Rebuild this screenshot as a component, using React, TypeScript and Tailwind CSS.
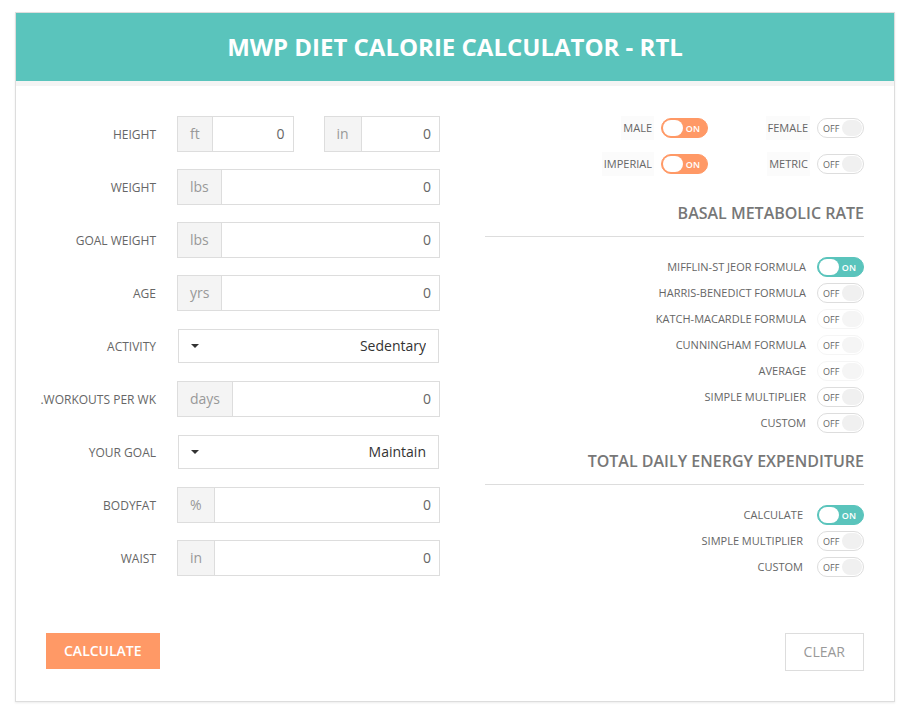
import { useState } from "react";
import type { ReactNode } from "react";

function Toggle({
  id,
  on = false,
  tone = "teal",
  faded = false,
}: {
  id: string;
  on?: boolean;
  tone?: "teal" | "orange";
  faded?: boolean;
}) {
  const [checked, setChecked] = useState(on);
  const onColor = tone === "teal" ? "border-[#5ac4bc] bg-[#5ac4bc]" : "border-[#ff9966] bg-[#ff9966]";
  const offColor = faded ? "border-[#f5f5f5] bg-white" : "border-[#dddddd] bg-white";
  return (
    <span
      className={`relative flex h-5 w-[47px] shrink-0 items-center justify-between rounded-full border px-px font-['Open_Sans','Noto_Sans',sans-serif] text-[9px] leading-none ${
        checked ? `flex-row ${onColor}` : `flex-row-reverse ${offColor}`
      }`}
    >
      <input
        id={id}
        type="checkbox"
        checked={checked}
        disabled={faded}
        onChange={(e) => setChecked(e.target.checked)}
        className="absolute inset-0 m-0 cursor-pointer appearance-none rounded-full"
      />
      <span
        className={`h-4 w-5 rounded-full ${checked ? "bg-white" : faded ? "bg-[#f5f5f5]" : "bg-[#f0f0f0]"}`}
      />
      <span className={checked ? "pr-[6px] font-semibold text-white" : "pl-1 text-[#666666]"}>
        {checked ? "ON" : "OFF"}
      </span>
    </span>
  );
}

function UnitInput({ id, unit, label }: { id: string; unit: string; label?: string }) {
  return (
    <div className="flex h-9 min-w-0 flex-1 border border-[#dddddd] text-sm">
      <span className="flex items-center border-r border-[#dddddd] bg-[#f4f4f4] px-3 text-[#999999]">{unit}</span>
      <input
        id={id}
        type="text"
        defaultValue="0"
        aria-label={label}
        className="w-0 min-w-0 flex-1 bg-white px-2 text-right text-[#666666] outline-none"
      />
    </div>
  );
}

function SelectBox({ id, options }: { id: string; options: string[] }) {
  return (
    <div className="relative m-px flex-1">
      <select
        id={id}
        dir="rtl"
        className="block h-[34px] w-full appearance-none border border-[#dddddd] bg-white px-3 text-sm text-[#333333] outline-none"
      >
        {options.map((o) => (
          <option key={o}>{o}</option>
        ))}
      </select>
      <svg
        className="pointer-events-none absolute top-[15px] left-[13px] h-1 w-2 fill-[#333333]"
        viewBox="0 0 8 4"
        aria-hidden="true"
      >
        <path d="M0 0h8L4 4z" />
      </svg>
    </div>
  );
}

function Field({ id, label, children }: { id: string; label: string; children: ReactNode }) {
  return (
    <div className="flex items-center gap-[21px]">
      <label htmlFor={id} className="w-[116px] shrink-0 pt-[2px] text-right text-xs whitespace-nowrap text-[#666666]">
        {label}
      </label>
      <div className="flex min-w-0 flex-1 gap-[30px]">{children}</div>
    </div>
  );
}

function Choice({ id, label, on }: { id: string; label: string; on?: boolean }) {
  return (
    <div className="flex items-center justify-end gap-[7px]">
      <label htmlFor={id} className="bg-[#fbfbfb] px-[2px] text-[11px] leading-6 text-[#666666]">
        {label}
      </label>
      <Toggle id={id} on={on} tone="orange" />
    </div>
  );
}

type Option = { id: string; label: string; on?: boolean; faded?: boolean };

function Section({ title, options, gap }: { title: string; options: Option[]; gap: string }) {
  return (
    <section>
      <h2 className="border-b border-[#dddddd] pb-[11px] text-right text-base leading-6 font-semibold text-[#777777]">
        {title}
      </h2>
      <div className="mt-5 flex flex-col gap-[6px]">
        {options.map((o) => (
          <div key={o.id} className={`flex items-center justify-end ${gap}`}>
            <label htmlFor={o.id} className="text-[11px] leading-5 text-[#666666]">
              {o.label}
            </label>
            <Toggle id={o.id} on={o.on} faded={o.faded} />
          </div>
        ))}
      </div>
    </section>
  );
}

const bmr: Option[] = [
  { id: "mifflin", label: "MIFFLIN-ST JEOR FORMULA", on: true },
  { id: "harris", label: "HARRIS-BENEDICT FORMULA" },
  { id: "katch", label: "KATCH-MACARDLE FORMULA", faded: true },
  { id: "cunningham", label: "CUNNINGHAM FORMULA", faded: true },
  { id: "average", label: "AVERAGE", faded: true },
  { id: "bmr-simple", label: "SIMPLE MULTIPLIER" },
  { id: "bmr-custom", label: "CUSTOM" },
];

const tdee: Option[] = [
  { id: "tdee-calculate", label: "CALCULATE", on: true },
  { id: "tdee-simple", label: "SIMPLE MULTIPLIER" },
  { id: "tdee-custom", label: "CUSTOM" },
];

export default function App() {
  return (
    <main className="bg-white px-[15px] pt-3 pr-4 pb-[14px] font-['Open_Sans','Noto_Sans',sans-serif]">
      <form
        onSubmit={(e) => e.preventDefault()}
        className="border border-[#dddddd] bg-white shadow-[0_1px_2px_rgba(0,0,0,0.08)]"
      >
        <header className="border-b-[5px] border-[#f4f4f4] bg-[#5ac4bc] bg-clip-padding text-center">
          <h1 className="text-2xl leading-[68px] font-bold text-white">MWP DIET CALORIE CALCULATOR - RTL</h1>
        </header>

        <div className="grid grid-cols-[400fr_379fr] gap-[45px] pt-[30px] pr-[30px] pl-6">
          <div className="flex flex-col gap-[17px]">
            <Field id="height-ft" label="HEIGHT">
              <UnitInput id="height-ft" unit="ft" />
              <UnitInput id="height-in" unit="in" label="Height in inches" />
            </Field>
            <Field id="weight" label="WEIGHT">
              <UnitInput id="weight" unit="lbs" />
            </Field>
            <Field id="goal-weight" label="GOAL WEIGHT">
              <UnitInput id="goal-weight" unit="lbs" />
            </Field>
            <Field id="age" label="AGE">
              <UnitInput id="age" unit="yrs" />
            </Field>
            <Field id="activity" label="ACTIVITY">
              <SelectBox id="activity" options={["Sedentary"]} />
            </Field>
            <Field id="workouts" label=".WORKOUTS PER WK">
              <UnitInput id="workouts" unit="days" />
            </Field>
            <Field id="goal" label="YOUR GOAL">
              <SelectBox id="goal" options={["Maintain"]} />
            </Field>
            <Field id="bodyfat" label="BODYFAT">
              <UnitInput id="bodyfat" unit="%" />
            </Field>
            <Field id="waist" label="WAIST">
              <UnitInput id="waist" unit="in" />
            </Field>
          </div>

          <div className="flex flex-col">
            <div className="mb-[25px] grid grid-cols-[1fr_156px] gap-y-3">
              <Choice id="male" label="MALE" on />
              <Choice id="female" label="FEMALE" />
              <Choice id="imperial" label="IMPERIAL" on />
              <Choice id="metric" label="METRIC" />
            </div>
            <div className="flex flex-col gap-4">
              <Section title="BASAL METABOLIC RATE" options={bmr} gap="gap-[11px]" />
              <Section title="TOTAL DAILY ENERGY EXPENDITURE" options={tdee} gap="gap-[14px]" />
            </div>
          </div>
        </div>

        <footer className="flex items-start justify-between px-[30px] pt-14 pb-[30px] text-sm">
          <button type="submit" className="h-9 bg-[#ff9966] px-[18px] font-semibold text-white">
            CALCULATE
          </button>
          <button type="reset" className="h-[38px] border border-[#dddddd] bg-white px-[18px] text-[#999999]">
            CLEAR
          </button>
        </footer>
      </form>
    </main>
  );
}
